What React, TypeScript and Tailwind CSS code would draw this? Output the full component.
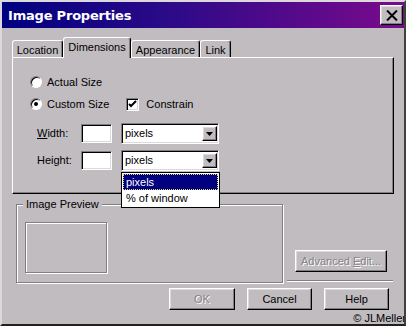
import React from "react";

const sunken =
  "border border-t-[#808080] border-l-[#808080] border-b-white border-r-white shadow-[inset_1px_1px_0_#000,inset_-1px_-1px_0_#dcd8dc]";
const raised =
  "border border-t-white border-l-white border-b-black border-r-black shadow-[inset_-1px_-1px_0_#808080,inset_1px_1px_0_#dcd8dc]";
const disabled = "text-[#868286] [text-shadow:1px_1px_0_#fff]";

const Radio = ({ checked }: { checked?: boolean }) => (
  <div
    className={
      "w-[12px] h-[12px] rounded-full bg-white flex items-center justify-center border border-t-[#808080] border-l-[#808080] border-b-white border-r-white shadow-[inset_1px_1px_0_#000]"
    }
  >
    {checked && <div className="w-[4px] h-[4px] rounded-full bg-black" />}
  </div>
);

const Checkbox = () => (
  <div className={"w-[13px] h-[13px] bg-white flex items-center justify-center " + sunken}>
    <svg width="9" height="9" viewBox="0 0 9 9">
      <path d="M1 4 L3 6 L8 1" fill="none" stroke="#000" strokeWidth="2" />
    </svg>
  </div>
);

const Select = ({ children }: { children?: React.ReactNode }) => (
  <div className={"relative w-[98px] h-[21px] bg-white flex items-center " + sunken}>
    <span className="pl-[3px] flex-1">pixels</span>
    <div className={"w-[15px] h-[15px] mr-[1px] bg-[#c0bcc0] flex items-center justify-center " + raised}>
      <svg width="7" height="4" viewBox="0 0 7 4">
        <path d="M0 0 H7 L3.5 4 Z" fill="#000" />
      </svg>
    </div>
    {children}
  </div>
);

const Button = ({ label, off, className }: { label: React.ReactNode; off?: boolean; className?: string }) => (
  <div
    className={cn(
      "h-[22px] flex items-center justify-center bg-[#c0bcc0]",
      raised,
      off ? disabled : "",
      className
    )}
  >
    {label}
  </div>
);

function cn(...c: (string | undefined | false)[]) {
  return c.filter(Boolean).join(" ");
}

export default function App() {
  const tabs = [
    { name: "Location", w: "w-[51px]" },
    { name: "Dimensions", w: "w-[68px]", active: true },
    { name: "Appearance", w: "w-[69px]" },
    { name: "Link", w: "w-[31px]" },
  ];

  return (
    <div className="relative w-[406px] h-[326px] overflow-hidden bg-[#c0bcc0] text-[11px] leading-none text-black font-['Liberation_Sans',Arial,sans-serif] border-2 border-t-[#dcd8dc] border-l-[#dcd8dc] border-r-[#404040] border-b-[#202020] flex flex-col">
      {/* Title bar */}
      <div className="h-[26px] flex items-center justify-between pl-[6px] pr-[1px] bg-[linear-gradient(90deg,#000080_0%,#2a0a88_40%,#7a0a8c_100%)]">
        <span className="text-white font-bold text-[13px] font-['DejaVu_Sans',Verdana,sans-serif] tracking-[-0.2px]">
          Image Properties
        </span>
        <div className={"w-[23px] h-[20px] bg-[#c0bcc0] flex items-center justify-center " + raised}>
          <svg width="12" height="11" viewBox="0 0 12 11">
            <path d="M1 0.5 L11 10.5 M11 0.5 L1 10.5" stroke="#000" strokeWidth="2" />
          </svg>
        </div>
      </div>

      {/* Tabs */}
      <div className="mt-[9px] pl-[10px] h-[20px] flex items-end">
        {tabs.map((t) =>
          t.active ? (
            <div
              key={t.name}
              className={cn(
                t.w,
                "relative z-10 -mb-[1px] h-[21px] bg-[#c0bcc0] rounded-t-[3px] border-t border-l border-t-white border-l-white border-r border-r-black shadow-[inset_-1px_0_0_#808080] flex justify-center pt-[4px]"
              )}
            >
              {t.name}
            </div>
          ) : (
            <div
              key={t.name}
              className={cn(
                t.w,
                "h-[17px] rounded-t-[3px] border-t border-l border-t-white border-l-white border-r border-r-black shadow-[inset_-1px_0_0_#808080] flex justify-center pt-[4px]"
              )}
            >
              {t.name}
            </div>
          )
        )}
      </div>

      {/* Tab panel */}
      <div className="ml-[10px] w-[382px] h-[137px] border border-t-white border-l-white border-r-black border-b-black shadow-[inset_-1px_-1px_0_#808080] flex flex-col pt-[18px] pl-[17px]">
        <div className="h-[12px] flex items-center">
          <Radio />
          <span className="ml-[5px]">Actual Size</span>
        </div>
        <div className="mt-[10px] h-[12px] flex items-center">
          <Radio checked />
          <span className="ml-[5px]">Custom Size</span>
          <div className="ml-[17px]">
            <Checkbox />
          </div>
          <span className="ml-[7px]">Constrain</span>
        </div>
        <div className="mt-[13px] h-[21px] flex items-center pl-[7px]">
          <span className="w-[44px]">
            <span className="underline">W</span>idth:
          </span>
          <div className={"w-[31px] h-[19px] bg-white " + sunken} />
          <div className="ml-[9px]">
            <Select />
          </div>
        </div>
        <div className="mt-[6px] h-[21px] flex items-center pl-[7px]">
          <span className="w-[44px]">Height:</span>
          <div className={"w-[31px] h-[19px] bg-white " + sunken} />
          <div className="ml-[9px]">
            <Select>
              <div className="absolute z-20 left-[-1px] top-[21px] w-[99px] bg-white border border-black flex flex-col p-[1px]">
                <div className="h-[16px] bg-[#000080] text-white flex items-center pl-[3px] outline-1 outline-dotted outline-[#e0e060] -outline-offset-1">
                  pixels
                </div>
                <div className="h-[16px] flex items-center pl-[3px]">% of window</div>
              </div>
            </Select>
          </div>
        </div>
      </div>

      {/* Lower area */}
      <div className="mt-[10px] ml-[14px] flex">
        <div className="relative w-[267px] h-[79px] border border-[#808080] shadow-[1px_1px_0_#fff,inset_1px_1px_0_#fff] pt-[17px] pl-[8px]">
          <span className="absolute -top-[6px] left-[6px] px-[3px] bg-[#c0bcc0]">Image Preview</span>
          <div className="w-[82px] h-[51px] border border-[#808080] shadow-[1px_1px_0_#fff,inset_1px_1px_0_#fff]" />
        </div>
        <div className="ml-[4px] w-[106px] flex flex-col">
          <Button
            off
            className="mt-[46px] ml-[8px] w-[92px]"
            label={
              <span>
                Advanced <span className="underline">E</span>dit...
              </span>
            }
          />
          <div className="mt-[8px] h-[2px] border-t border-t-[#808080] border-b border-b-white" />
        </div>
      </div>

      <div className="mt-[5px] pr-[15px] flex justify-end gap-[12px]">
        <Button off label="OK" className="w-[66px]" />
        <Button label="Cancel" className="w-[65px]" />
        <Button label="Help" className="w-[65px]" />
      </div>

      <span className="absolute -right-[2px] bottom-0 text-[11px] leading-[12px] font-['Liberation_Sans',Arial,sans-serif]">
        © JLMeller
      </span>
    </div>
  );
}
